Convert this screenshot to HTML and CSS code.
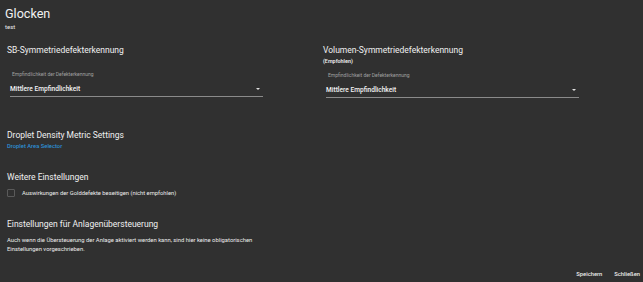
FILE: index.html
```html
<!DOCTYPE html>
<html lang="de">
<head>
<meta charset="utf-8">
<link rel="stylesheet" href="styles.css">
</head>
<body>
<div class="dialog">
  <header class="head">
    <h1 class="title">Glocken</h1>
    <div class="subtitle">test</div>
  </header>
  <div class="cols">
    <section class="col">
      <h2 class="h">SB-Symmetriedefekterkennung</h2>
      <div class="field">
        <div class="flabel">Empfindlichkeit der Defekterkennung</div>
        <div class="select"><span>Mittlere Empfindlichkeit</span><span class="arrow"></span></div>
      </div>
    </section>
    <section class="col">
      <h2 class="h">Volumen-Symmetriedefekterkennung</h2>
      <div class="rec">(Empfohlen)</div>
      <div class="field">
        <div class="flabel">Empfindlichkeit der Defekterkennung</div>
        <div class="select"><span>Mittlere Empfindlichkeit</span><span class="arrow"></span></div>
      </div>
    </section>
  </div>
  <section class="sec s-droplet">
    <h2 class="h">Droplet Density Metric Settings</h2>
    <a class="link" href="#">Droplet Area Selector</a>
  </section>
  <section class="sec s-more">
    <h2 class="h">Weitere Einstellungen</h2>
    <label class="check"><span class="box"></span>Auswirkungen der Golddefekte beseitigen (nicht empfohlen)</label>
  </section>
  <section class="sec s-over">
    <h2 class="h">Einstellungen für Anlagenübersteuerung</h2>
    <p class="para">Auch wenn die Übersteuerung der Anlage aktiviert werden kann, sind hier keine obligatorischen Einstellungen vorgeschrieben.</p>
  </section>
  <footer class="actions">
    <button class="btn">Speichern</button>
    <button class="btn">Schließen</button>
  </footer>
</div>
</body>
</html>
```
FILE: styles.css
```css
html, body {
  margin: 0;
  padding: 0;
  background: #303030;
}
body {
  font-family: Roboto, "Liberation Sans", sans-serif;
  color: #ececec;
  width: 643px;
  height: 282px;
  overflow: hidden;
}
.dialog {
  padding: 0 0 0 7px;
  position: relative;
  height: 282px;
  box-sizing: border-box;
}
.head {
  margin-left: -2px;
  padding-top: 6px;
}
.title {
  margin: 0;
  font-size: 12.6px;
  font-weight: 400;
  line-height: 16px;
  color: #f2f2f2;
}
.subtitle {
  font-size: 6px;
  line-height: 8px;
  margin-top: 1px;
  font-weight: 400;
}
.h {
  margin: 0;
  font-size: 8.5px;
  font-weight: 400;
  line-height: 12px;
  color: #f0f0f0;
}
.cols {
  display: grid;
  grid-template-columns: 316px 1fr;
  margin-top: 13px;
}
.rec {
  font-size: 5.4px;
  font-weight: 600;
  line-height: 8px;
  margin-top: 1px;
}
.col:first-child .field {
  margin-top: 15px;
}
.field {
  margin-top: 7px;
  margin-left: 3px;
  width: 253px;
}
.flabel {
  font-size: 5px;
  color: #a0a0a0;
  line-height: 7px;
  padding-left: 2px;
}
.select {
  display: flex;
  align-items: center;
  justify-content: space-between;
  font-size: 6.6px;
  font-weight: 500;
  line-height: 8px;
  padding: 7px 0 3px 0;
  border-bottom: 1px solid #8a8a8a;
  color: #f4f4f4;
}
.arrow {
  width: 0;
  height: 0;
  border-left: 2px solid transparent;
  border-right: 2px solid transparent;
  border-top: 2px solid #e0e0e0;
  margin-right: 3px;
}
.s-droplet {
  margin-top: 31px;
}
.link {
  display: block;
  font-size: 5.8px;
  font-weight: 500;
  line-height: 8px;
  color: #2d8fd5;
  text-decoration: none;
  margin-top: 1px;
}
.s-more {
  margin-top: 21px;
}
.check {
  display: flex;
  align-items: center;
  gap: 7px;
  font-size: 5.8px;
  line-height: 8px;
  margin-top: 6px;
  color: #ececec;
}
.box {
  width: 6px;
  height: 6px;
  border: 1px solid #5a5a5a;
  border-radius: 1px;
}
.s-over {
  margin-top: 21px;
}
.para {
  margin: 6px 0 0 0;
  width: 262px;
  font-size: 5.85px;
  line-height: 9px;
  color: #ececec;
}
.actions {
  position: absolute;
  right: 3px;
  bottom: 4px;
  display: flex;
  gap: 12px;
}
.btn {
  background: none;
  border: 0;
  padding: 0;
  font-family: inherit;
  font-size: 5.8px;
  font-weight: 500;
  color: #ececec;
  line-height: 8px;
}
```
